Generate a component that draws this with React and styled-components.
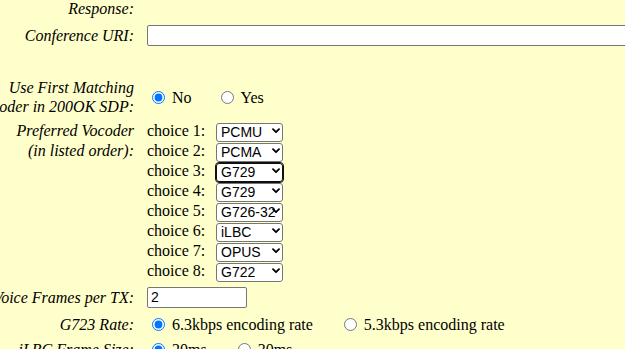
import React from 'react';
import styled, { createGlobalStyle } from 'styled-components';

const GlobalStyle = createGlobalStyle`
  html, body {
    margin: 0;
    padding: 0;
    background: #ffffcc;
    overflow: hidden;
  }
  body {
    font-family: "Liberation Serif", "Times New Roman", serif;
    font-size: 16px;
    color: #000;
  }
`;

// the page is scrolled down and to the right a little
const Page = styled.div`
  margin: -20px 0 0 -116px;
  display: flex;
  flex-direction: column;
  gap: 4px;
  width: 1000px;
`;

const Row = styled.div`
  display: grid;
  grid-template-columns: 250px 1fr;
  column-gap: 13px;
  align-items: ${p => (p.$top ? 'start' : 'center')};
  height: ${p => p.$h}px;
`;

const Label = styled.div`
  font-style: italic;
  line-height: ${p => p.$lh || 19}px;
  text-align: right;
  white-space: nowrap;
  padding-top: ${p => p.$pt || 0}px;
`;

const Value = styled.div`
  display: flex;
  align-items: center;
`;

const TextInput = styled.input`
  font: 14px "Liberation Sans", Arial, sans-serif;
  width: ${p => p.$w}px;
  box-sizing: border-box;
  height: 21px;
  padding: 1px 3px;
  margin: 0;
  background: #fff;
  border: 1px solid #767676;
  border-radius: 2px;
`;

const Choices = styled.div`
  display: flex;
  flex-direction: column;
  padding-top: 2px;
`;

const ChoiceLine = styled.div`
  display: grid;
  grid-template-columns: 69px 67px;
  align-items: center;
  height: 20px;
  line-height: 20px;
`;

const SelectWrap = styled.div`
  position: relative;
  width: 67px;
  height: 19px;
`;

const Select = styled.select`
  appearance: none;
  -webkit-appearance: none;
  font: 14px "Liberation Sans", Arial, sans-serif;
  width: 67px;
  height: 19px;
  box-sizing: border-box;
  margin: 0;
  padding: 0 0 0 4px;
  background: #fff;
  color: #000;
  border: 1px solid ${p => (p.$focused ? '#101010' : '#767676')};
  border-radius: 3px;
  outline: ${p => (p.$focused ? '1px solid #101010' : 'none')};
  line-height: 17px;
`;

const Chevron = styled.svg`
  position: absolute;
  right: 3px;
  top: 6px;
  width: 8px;
  height: 6px;
  pointer-events: none;
`;

const RadioGroup = styled.div`
  display: flex;
  align-items: center;
`;

const Option = styled.label`
  display: inline-flex;
  align-items: center;
  margin-right: ${p => p.$gap || 0}px;
  line-height: 19px;
  white-space: nowrap;
`;

const Radio = styled.input`
  width: 13px;
  height: 13px;
  margin: 0 3px 0 5px;
`;

const OptionText = styled.span`
  margin-left: 4px;
`;

const vocoders = ['PCMU', 'PCMA', 'G729', 'G726-32', 'iLBC', 'OPUS', 'G722', 'G723'];
const picked = ['PCMU', 'PCMA', 'G729', 'G729', 'G726-32', 'iLBC', 'OPUS', 'G722'];

function Radios({ name, options, checked, gap }) {
  return (
    <RadioGroup>
      {options.map((o, i) => (
        <Option key={o} $gap={i < options.length - 1 ? gap : 0}>
          <Radio type="radio" name={name} defaultChecked={i === checked} />
          <OptionText>{o}</OptionText>
        </Option>
      ))}
    </RadioGroup>
  );
}

function VocoderSelect({ value, focused }) {
  return (
    <SelectWrap>
      <Select defaultValue={value} $focused={focused}>
        {vocoders.map(o => <option key={o}>{o}</option>)}
      </Select>
      <Chevron viewBox="0 0 8 6">
        <polyline points="1,1.2 4,4.2 7,1.2" fill="none" stroke="#000" strokeWidth="1.8" strokeLinecap="round" strokeLinejoin="round" />
      </Chevron>
    </SelectWrap>
  );
}

export default function App() {
  return (
    <>
      <GlobalStyle />
      <Page>
        <Row $h={38}>
          <Label>Call Waiting Tone<br />Response:</Label>
          <div />
        </Row>
        <Row $h={26}>
          <Label>Conference URI:</Label>
          <Value>
            <TextInput type="text" $w={520} defaultValue="" />
          </Value>
        </Row>
        <Row $h={22}>
          <div />
          <div />
        </Row>
        <Row $h={37}>
          <Label>Use First Matching<br />Vocoder in 200OK SDP:</Label>
          <Radios name="firstmatch" options={['No', 'Yes']} checked={0} gap={24} />
        </Row>
        <Row $h={162} $top>
          <Label $lh={20} $pt={2}>Preferred Vocoder<br />(in listed order):</Label>
          <Choices>
            {picked.map((v, i) => (
              <ChoiceLine key={i}>
                <span>choice {i + 1}:</span>
                <VocoderSelect value={v} focused={i === 2} />
              </ChoiceLine>
            ))}
          </Choices>
        </Row>
        <Row $h={24}>
          <Label>Voice Frames per TX:</Label>
          <Value>
            <TextInput type="text" $w={100} defaultValue="2" />
          </Value>
        </Row>
        <Row $h={22}>
          <Label>G723 Rate:</Label>
          <Radios name="g723" options={['6.3kbps encoding rate', '5.3kbps encoding rate']} checked={0} gap={26} />
        </Row>
        <Row $h={20}>
          <Label>iLBC Frame Size:</Label>
          <Radios name="ilbc" options={['20ms', '30ms']} checked={0} gap={26} />
        </Row>
      </Page>
    </>
  );
}
